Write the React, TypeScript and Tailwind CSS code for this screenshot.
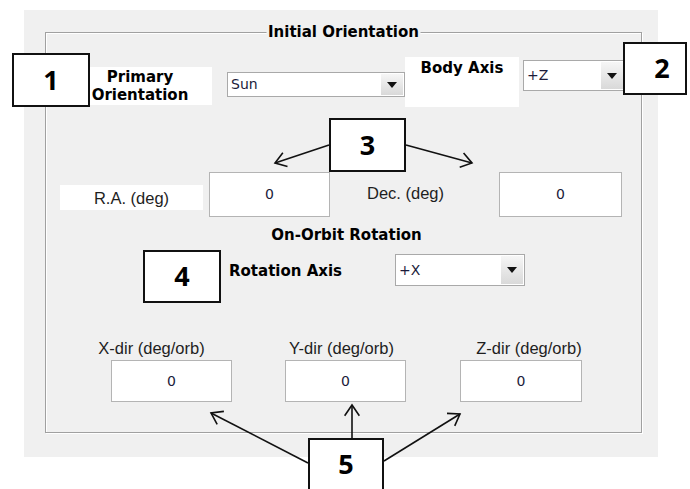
const boldLabel = "font-['DejaVu_Sans',sans-serif] font-bold text-[15px] text-black leading-[16px] whitespace-nowrap";
const plainLabel = "font-['Liberation_Sans',sans-serif] text-[16.5px] text-[#1e1e1e] leading-[20px] whitespace-nowrap";

function Select({ value, className }: { value: string; className: string }) {
  return (
    <div className={`flex items-stretch bg-white border border-[#a9a9a9] ${className}`}>
      <span className="flex-1 flex items-center pl-[3px] font-['DejaVu_Sans',sans-serif] text-[14px] text-[#1b1b3a]">
        {value}
      </span>
      <span className="w-[22px] my-px mr-px flex items-center justify-center bg-linear-to-b from-[#f6f6f6] to-[#d9d9d9]">
        <svg width="10" height="6" viewBox="0 0 10 6">
          <path d="M0 0h10L5 6z" fill="#111" />
        </svg>
      </span>
    </div>
  );
}

function Field({ className }: { className: string }) {
  return (
    <div
      className={`flex items-center justify-center bg-white border border-[#b4b4b4] font-['DejaVu_Sans',sans-serif] text-[14px] text-[#1b1b3a] ${className}`}
    >
      0
    </div>
  );
}

function Callout({ n, className }: { n: string; className: string }) {
  return (
    <div
      className={`absolute flex items-center justify-center bg-white border-2 border-[#111] font-['Open_Sans',sans-serif] font-bold text-[27px] text-black ${className}`}
    >
      {n}
    </div>
  );
}

function Arrow({ x1, y1, x2, y2 }: { x1: number; y1: number; x2: number; y2: number }) {
  const a = Math.atan2(y2 - y1, x2 - x1);
  const len = 13;
  const s = 0.6;
  const p1 = `${x2 - len * Math.cos(a - s)},${y2 - len * Math.sin(a - s)}`;
  const p2 = `${x2 - len * Math.cos(a + s)},${y2 - len * Math.sin(a + s)}`;
  return (
    <g>
      <line x1={x1} y1={y1} x2={x2} y2={y2} />
      <polyline points={`${p1} ${x2},${y2} ${p2}`} />
    </g>
  );
}

export default function App() {
  return (
    <div className="relative w-[690px] h-[489px] overflow-hidden bg-white">
      {/* dialog panel */}
      <div className="ml-[24px] pt-[22px] pl-[21px] mt-[10px] w-[634px] h-[447px] bg-[#f0f0f0]">
        <div className="relative w-[597px] h-[401px] border border-[#a0a0a0] shadow-[inset_1px_1px_0_#fff,1px_1px_0_#fff]">
          <div className={`absolute -top-[9px] left-1/2 -translate-x-1/2 bg-[#f0f0f0] px-[2px] ${boldLabel}`}>
            Initial Orientation
          </div>

          {/* primary orientation / body axis */}
          <div className="flex items-start mt-[24px]">
            <div className="ml-[44px] mt-[10px] w-[122px] h-[38px] bg-white pl-[1px] pt-px">
              <div className={`w-[98px] text-center ${boldLabel} leading-[18px]`}>
                Primary
                <br />
                Orientation
              </div>
            </div>
            <Select value="Sun" className="ml-[15px] mt-[15px] w-[178px] h-[25px]" />
            <div className="w-[114px] h-[50px] bg-white pt-[3px]">
              <div className={`text-center ${boldLabel}`}>Body Axis</div>
            </div>
            <Select value="+Z" className="ml-[4px] mt-[3px] w-[102px] h-[31px]" />
          </div>

          {/* R.A. / Dec. */}
          <div className="flex items-start mt-[65px]">
            <div className={`ml-[14px] mt-[13px] w-[143px] h-[25px] bg-white flex items-center justify-center ${plainLabel}`}>
              R.A. (deg)
            </div>
            <Field className="ml-[6px] w-[121px] h-[45px]" />
            <div className={`w-[169px] pl-[37px] mt-[11px] ${plainLabel}`}>Dec. (deg)</div>
            <Field className="w-[123px] h-[45px]" />
          </div>

          <div className={`mt-[10px] pl-[6px] text-center ${boldLabel}`}>On-Orbit Rotation</div>

          {/* rotation axis */}
          <div className="flex items-start mt-[11px]">
            <div className={`ml-[183px] mt-[9px] w-[166px] ${boldLabel}`}>Rotation Axis</div>
            <Select value="+X" className="w-[130px] h-[32px]" />
          </div>

          {/* rates */}
          <div className="flex mt-[52px]">
            <div className={`ml-[40px] w-[131px] text-center ${plainLabel}`}>X-dir (deg/orb)</div>
            <div className={`ml-[59px] w-[131px] text-center ${plainLabel}`}>Y-dir (deg/orb)</div>
            <div className={`ml-[56px] w-[132px] text-center ${plainLabel}`}>Z-dir (deg/orb)</div>
          </div>
          <div className="flex mt-[2px]">
            <Field className="ml-[65px] w-[121px] h-[42px]" />
            <Field className="ml-[53px] w-[121px] h-[42px]" />
            <Field className="ml-[54px] w-[122px] h-[42px]" />
          </div>
        </div>
      </div>

      {/* annotations */}
      <Callout n="1" className="left-[12px] top-[53px] w-[78px] h-[54px]" />
      <Callout n="2" className="left-[623px] top-[42px] w-[64px] h-[53px] pl-[14px]" />
      <Callout n="3" className="left-[329px] top-[118px] w-[77px] h-[54px]" />
      <Callout n="4" className="left-[143px] top-[250px] w-[78px] h-[53px]" />
      <Callout n="5" className="left-[308px] top-[438px] w-[76px] h-[60px] pb-[7px]" />

      <svg className="absolute inset-0 pointer-events-none" width="690" height="489" fill="none" stroke="#111" strokeWidth="1.6">
        <Arrow x1={329} y1={145} x2={275} y2={163} />
        <Arrow x1={406} y1={145} x2={472} y2={163} />
        <Arrow x1={308} y1={463} x2={211} y2={413} />
        <Arrow x1={352} y1={438} x2={352} y2={405} />
        <Arrow x1={384} y1={461} x2={460} y2={414} />
      </svg>
    </div>
  );
}
